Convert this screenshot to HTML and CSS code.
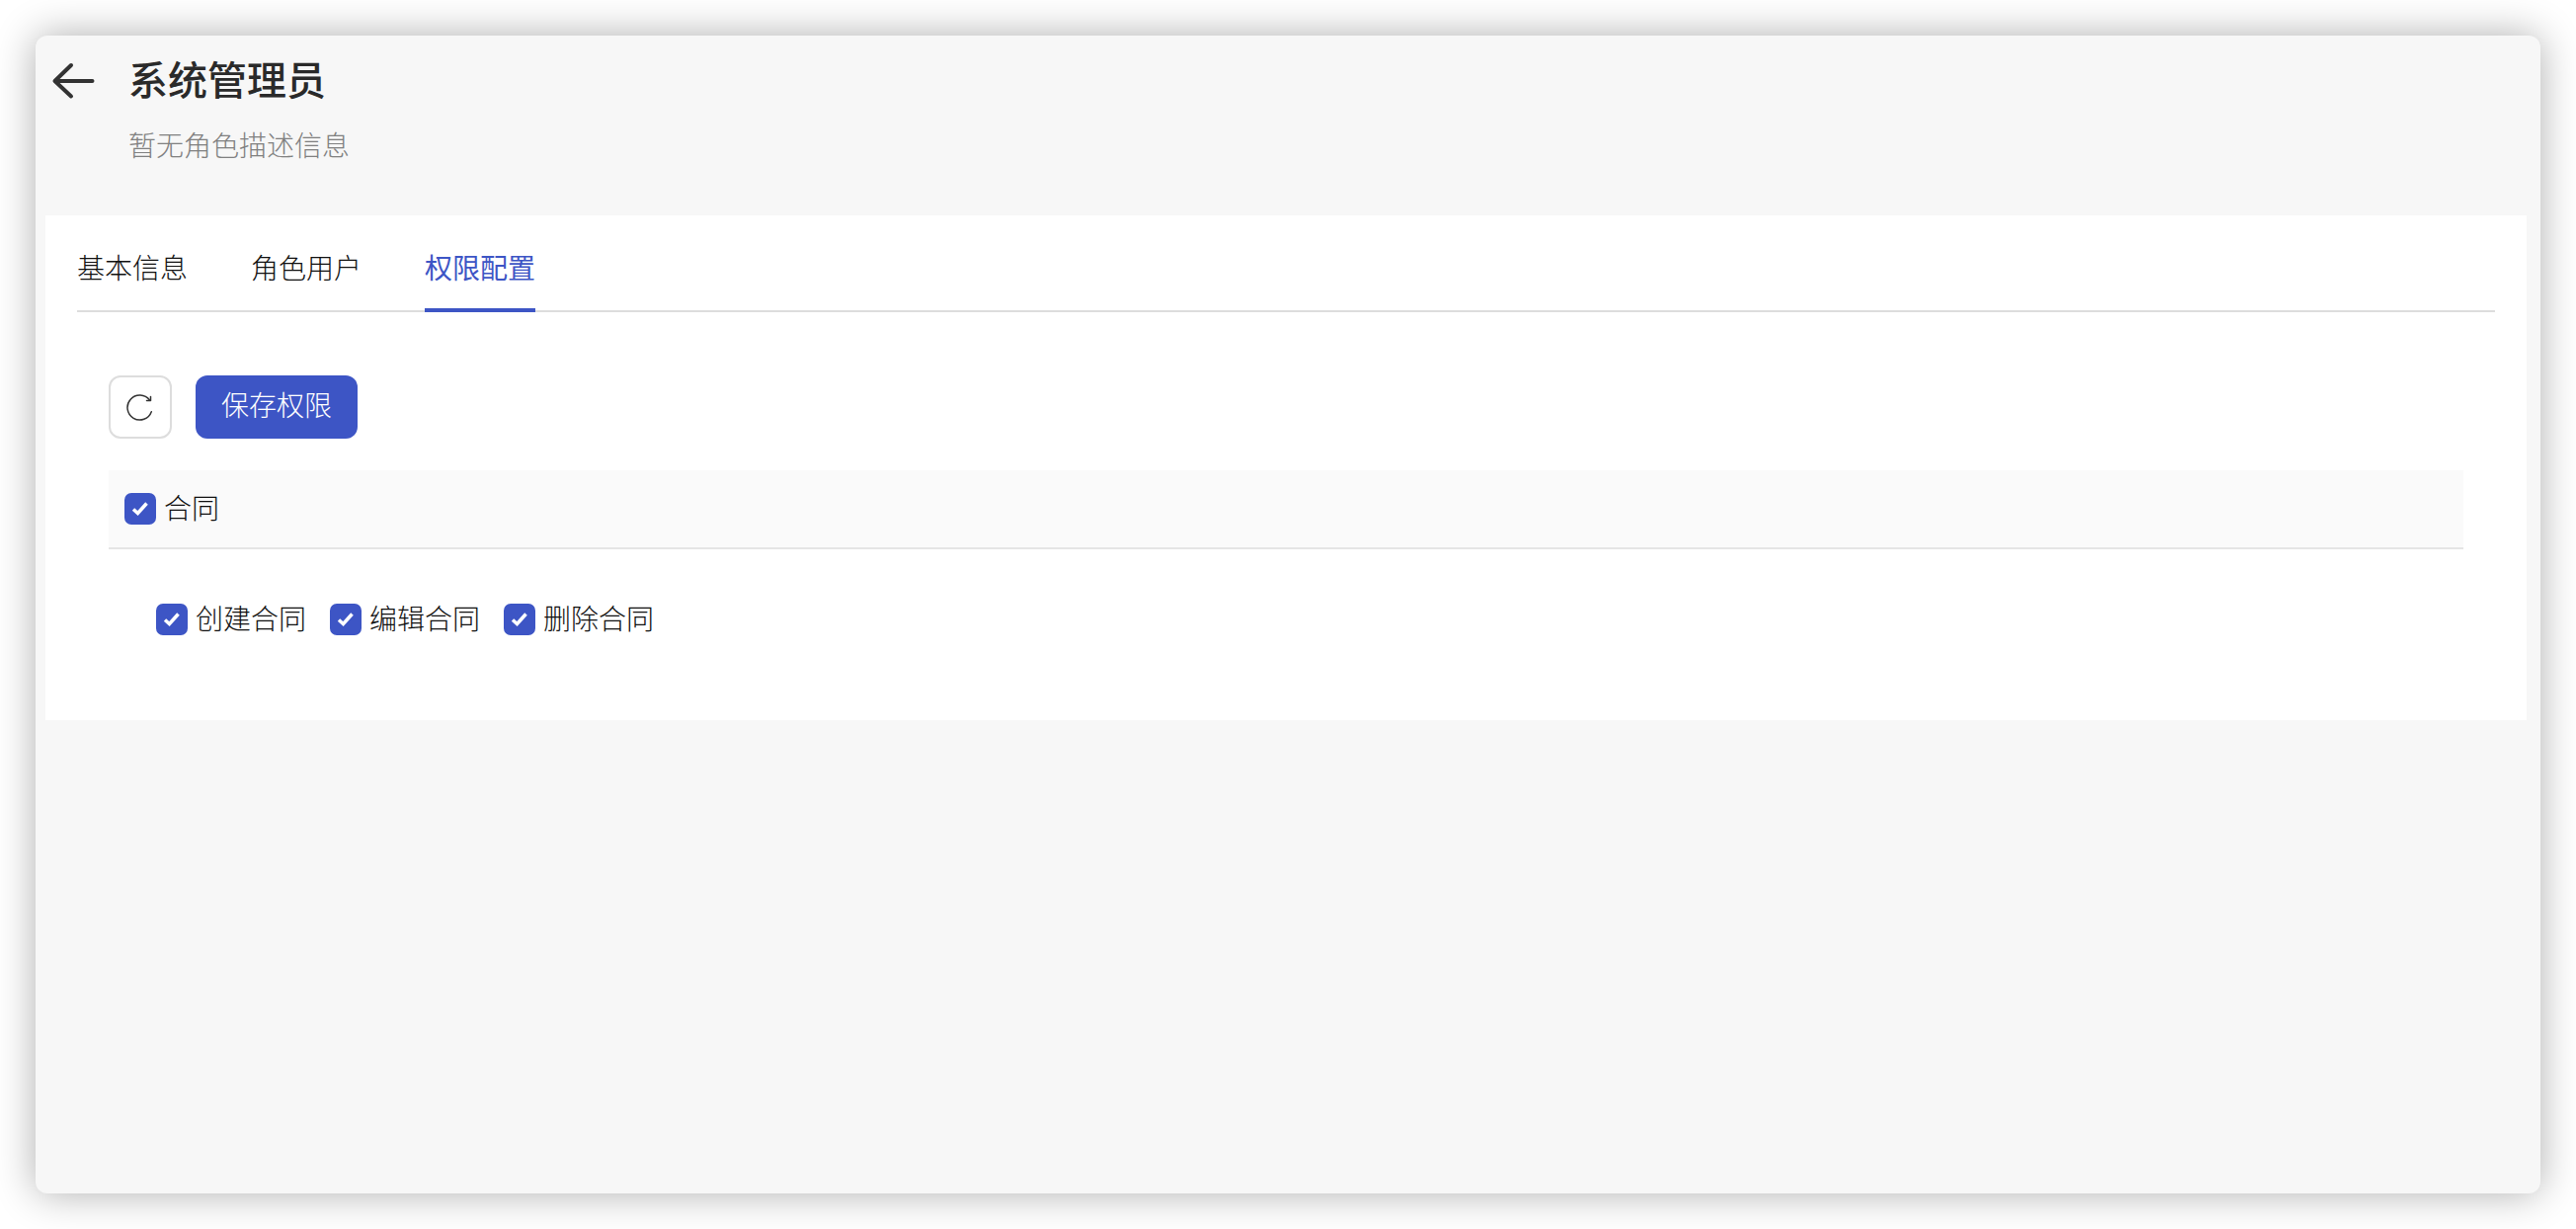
FILE: index.html
```html
<!DOCTYPE html>
<html lang="zh-CN">
<head>
<meta charset="utf-8">
<title>系统管理员</title>
<link rel="stylesheet" href="styles.css">
</head>
<body>
<main class="window">
  <header class="page-head">
    <svg class="back" width="48" height="48" viewBox="0 0 48 48" fill="none" stroke="#333" stroke-width="4" stroke-linecap="round" stroke-linejoin="round"><path d="M43.500 24H6M22 8 5.500 24 22 39.500"/></svg>
    <div class="head-text">
      <h1 class="title">系统管理员</h1>
      <p class="subtitle">暂无角色描述信息</p>
    </div>
  </header>
  <section class="card">
    <nav class="tabs">
      <a class="tab">基本信息</a>
      <a class="tab">角色用户</a>
      <a class="tab active">权限配置</a>
    </nav>
    <div class="panel">
      <div class="toolbar">
        <button class="btn-icon" aria-label="刷新"><svg width="30" height="30" viewBox="0 0 30 30" fill="none" stroke="#333" stroke-width="1.500" stroke-linecap="round" stroke-linejoin="round"><path d="M26.300 19.700A12.500 12.500 0 1 1 24.500 8"/><path d="M25.500 4.500V8.500H21.500"/></svg></button>
        <button class="btn-primary">保存权限</button>
      </div>
      <div class="group-head">
        <label class="check"><span class="box"><svg width="32" height="32" viewBox="0 0 32 32" fill="none" stroke="#fff" stroke-width="3.500"><path d="M9 16.500 13.500 20.500 22.500 10.500"/></svg></span>合同</label>
      </div>
      <div class="group-items">
        <label class="check"><span class="box"><svg width="32" height="32" viewBox="0 0 32 32" fill="none" stroke="#fff" stroke-width="3.500"><path d="M9 16.500 13.500 20.500 22.500 10.500"/></svg></span>创建合同</label>
        <label class="check"><span class="box"><svg width="32" height="32" viewBox="0 0 32 32" fill="none" stroke="#fff" stroke-width="3.500"><path d="M9 16.500 13.500 20.500 22.500 10.500"/></svg></span>编辑合同</label>
        <label class="check"><span class="box"><svg width="32" height="32" viewBox="0 0 32 32" fill="none" stroke="#fff" stroke-width="3.500"><path d="M9 16.500 13.500 20.500 22.500 10.500"/></svg></span>删除合同</label>
      </div>
    </div>
  </section>
</main>
</body>
</html>
```
FILE: styles.css
```css
* { box-sizing: border-box; }
html, body { margin: 0; height: 100%; }
body {
  background: #fff;
  padding: 36px;
  font-family: "Noto Sans CJK SC", "Noto Sans", sans-serif;
  font-weight: 300;
  color: #111;
  overflow: hidden;
}
.window {
  height: 1172px;
  background: #f7f7f7;
  border-radius: 12px;
  box-shadow: 0 0 40px rgba(0, 0, 0, .32);
  padding: 0 14px 0 10px;
}
.page-head {
  height: 182px;
  display: flex;
  align-items: flex-start;
  padding-top: 22px;
  gap: 32px;
}
.back { flex: none; margin-left: 4px; }
.title {
  margin: -2px 0 0;
  font-size: 40px;
  line-height: 46px;
  font-weight: 500;
  color: #2a2a2a;
}
.subtitle {
  margin: 24px 0 0;
  font-size: 28px;
  line-height: 40px;
  color: #808080;
}
.card {
  background: #fff;
  height: 511px;
  padding: 0 32px;
}
.tabs {
  height: 98px;
  display: flex;
  gap: 64px;
  border-bottom: 2px solid #ddd;
}
.tab {
  height: 98px;
  font-size: 28px;
  line-height: 60px;
  padding-top: 22px;
  color: #111;
}
.tab.active {
  color: #3d55c5;
  font-weight: 400;
  border-bottom: 4px solid #3d55c5;
}
.panel { padding: 64px 32px 0; }
.toolbar { display: flex; gap: 24px; }
.btn-icon {
  width: 64px;
  height: 64px;
  padding: 0;
  background: #fff;
  border: 2px solid #ddd;
  border-radius: 12px;
  display: flex;
  align-items: center;
  justify-content: center;
}
.btn-primary {
  width: 164px;
  height: 64px;
  padding: 0 0 6px;
  border: 0;
  border-radius: 12px;
  background: #3d55c5;
  color: #fff;
  font: 300 28px/58px "Noto Sans CJK SC", "Noto Sans", sans-serif;
}
.group-head {
  margin-top: 32px;
  height: 80px;
  background: #fafafa;
  border-bottom: 2px solid #e5e5e5;
  padding: 0 16px;
  display: flex;
  align-items: center;
}
.group-items {
  display: flex;
  gap: 24px;
  padding: 55px 48px 0;
}
.check {
  display: flex;
  align-items: flex-start;
  gap: 8px;
  font-size: 28px;
  line-height: 28px;
  height: 32px;
  color: #111;
}
.box {
  width: 32px;
  height: 32px;
  border-radius: 7px;
  background: #3d55c5;
  display: flex;
  align-items: center;
  justify-content: center;
}
```
